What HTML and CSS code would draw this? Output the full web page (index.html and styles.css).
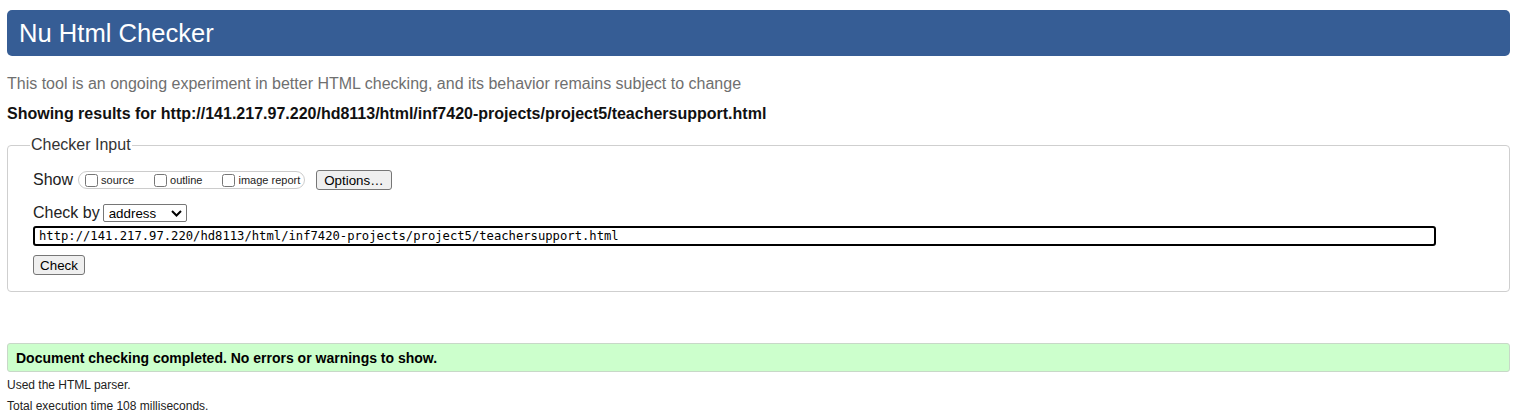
FILE: index.html
```html
<!DOCTYPE html>
<html lang="en">
<head>
<meta charset="utf-8">
<title>Nu Html Checker</title>
<link rel="stylesheet" href="styles.css">
</head>
<body>
<h1 class="title">Nu Html Checker</h1>
<p class="intro">This tool is an ongoing experiment in better HTML checking, and its behavior remains subject to change</p>
<p class="results">Showing results for http://141.217.97.220/hd8113/html/inf7420-projects/project5/teachersupport.html</p>
<form class="form">
<fieldset class="input-set">
<legend class="legend">Checker Input</legend>
<div class="row show-row">
<span class="label">Show</span>
<span class="opt-group">
<label class="opt"><input type="checkbox" class="cb">source</label>
<label class="opt"><input type="checkbox" class="cb">outline</label>
<label class="opt last"><input type="checkbox" class="cb">image report</label>
</span>
<button type="button" class="btn options-btn">Options…</button>
</div>
<div class="row by-row">
<span class="label">Check by</span>
<span class="select-wrap">
<select class="select"><option>address</option></select>
<svg class="chev" width="11" height="7" viewBox="0 0 11 7"><path d="M1 1 L5.5 5.5 L10 1" fill="none" stroke="#000" stroke-width="2"/></svg>
</span>
</div>
<input class="url" type="text" value="http://141.217.97.220/hd8113/html/inf7420-projects/project5/teachersupport.html">
<button type="button" class="btn check-btn">Check</button>
</fieldset>
</form>
<div class="success">Document checking completed. No errors or warnings to show.</div>
<p class="stat">Used the HTML parser.</p>
<p class="stat stat2">Total execution time 108 milliseconds.</p>
</body>
</html>
```
FILE: styles.css
```css
html, body {
  margin: 0;
  background: #fff;
}
body {
  padding: 10px 10px 0 7px;
  font-family: "Liberation Sans", Arial, sans-serif;
  color: #000;
  overflow: hidden;
}
.title {
  margin: 0;
  height: 46px;
  box-sizing: border-box;
  padding: 1px 12px 0;
  display: flex;
  align-items: center;
  background: #365d95;
  color: #fff;
  font-size: 25.6px;
  font-weight: normal;
  border-radius: 5px;
}
.intro {
  margin: 19px 0 0;
  font-size: 16px;
  line-height: 18px;
  color: #6f6f6f;
}
.results {
  margin: 12px 0 0;
  font-size: 16px;
  line-height: 18px;
  font-weight: bold;
  color: #111;
}
.form {
  margin: 13px 0 0;
}
.input-set {
  margin: 0;
  padding: 0 0 16px 25px;
  border: 1px solid #cfcfcf;
  border-radius: 4px;
  min-width: 0;
}
.legend {
  margin-left: -3px;
  padding: 0 1px;
  font-size: 16px;
  line-height: 18px;
  color: #333;
}
.row {
  display: flex;
  align-items: center;
  height: 20px;
}
.show-row {
  margin-top: 16px;
}
.label {
  font-size: 16px;
  color: #222;
}
.opt-group {
  display: flex;
  align-items: center;
  height: 18px;
  box-sizing: border-box;
  margin-left: 5px;
  padding: 0 4px 0 2px;
  border: 1px solid #cccccc;
  border-radius: 9px;
}
.opt {
  display: flex;
  align-items: center;
  font-size: 11px;
  color: #222;
  margin-right: 16px;
}
.opt.last {
  margin-right: 0;
}
.cb {
  width: 13px;
  height: 13px;
  margin: 0 3px 0 4px;
}
.btn {
  height: 20px;
  box-sizing: border-box;
  background: #efefef;
  border: 1px solid #767676;
  border-radius: 3px;
  font-family: "Liberation Sans", Arial, sans-serif;
  font-size: 13.33px;
  color: #000;
  padding: 0 7px;
}
.options-btn {
  margin-left: 11px;
}
.by-row {
  margin-top: 13px;
}
.select-wrap {
  position: relative;
  display: inline-block;
  margin-left: 3px;
  height: 18px;
}
.select {
  appearance: none;
  -webkit-appearance: none;
  width: 84px;
  height: 18px;
  box-sizing: border-box;
  border: 1px solid #767676;
  border-radius: 2px;
  background: #fff;
  padding: 0 0 0 5px;
  font-family: "Liberation Sans", Arial, sans-serif;
  font-size: 13.33px;
  color: #000;
  display: block;
}
.chev {
  position: absolute;
  right: 5px;
  top: 6px;
  pointer-events: none;
}
.url {
  display: block;
  margin-top: 3px;
  width: 1403px;
  height: 20px;
  box-sizing: border-box;
  border: 2px solid #000;
  border-radius: 3px;
  padding: 0 4px;
  font-family: "DejaVu Sans Mono", "Liberation Mono", monospace;
  font-size: 12.2px;
  color: #000;
  outline: none;
}
.check-btn {
  display: block;
  margin-top: 9px;
  width: 52px;
  padding: 0;
}
.success {
  margin-top: 51px;
  height: 29px;
  box-sizing: border-box;
  display: flex;
  align-items: center;
  padding-left: 8px;
  background: #ccffcc;
  border: 1px solid #c8d8c8;
  border-radius: 3px;
  font-size: 14px;
  font-weight: bold;
  color: #000;
}
.stat {
  margin: 6px 0 0;
  font-size: 12px;
  line-height: 14px;
  color: #222;
}
.stat2 {
  margin-top: 7px;
}
```
